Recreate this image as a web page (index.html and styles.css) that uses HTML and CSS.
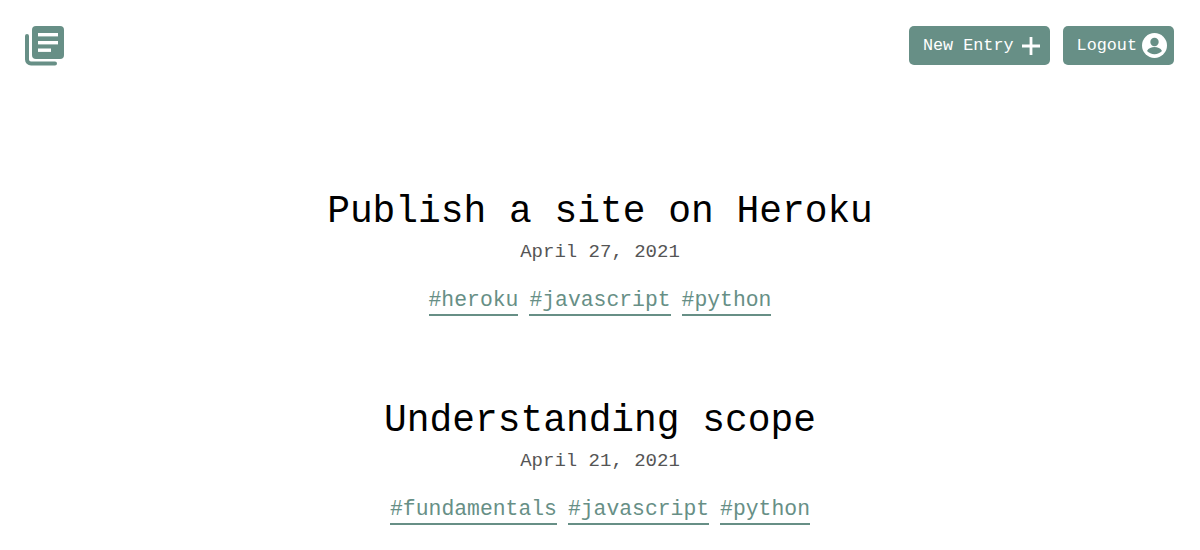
FILE: index.html
```html
<!DOCTYPE html>
<html lang="en">
<head>
  <meta charset="UTF-8">
  <meta name="viewport" content="width=device-width, initial-scale=1.0">
  <title>Journal</title>
  <link rel="stylesheet" href="styles.css">
</head>
<body>

  <!-- Top bar -->
  <header class="topbar">
    <a class="logo" href="#">
      <svg width="42" height="42" viewBox="0 0 42 42">
        <path class="logo-back" d="M3 10v23.500a4 4 0 0 0 4 4h24" />
        <rect class="logo-front" x="8" y="0" width="32" height="33" rx="4" />
        <rect class="logo-line" x="14" y="7" width="20" height="3.4" />
        <rect class="logo-line" x="14" y="15" width="20" height="3.4" />
        <rect class="logo-line" x="14" y="22.5" width="13" height="3.4" />
      </svg>
    </a>
    <nav class="actions">
      <a class="btn btn-new" href="#">New Entry
        <svg width="20" height="20" viewBox="0 0 20 20"><path class="plus" d="M10 1v18M1 10h18" /></svg>
      </a>
      <a class="btn btn-logout" href="#">Logout
        <svg width="25" height="25" viewBox="0 0 25 25">
          <circle class="user-bg" cx="12.5" cy="12.5" r="12.5" />
          <circle class="user-fg" cx="12.5" cy="9" r="4.2" />
          <path class="user-fg" d="M5 18c1.500-3 4.500-4 7.500-4s6 1 7.500 4c-1.800 2-4.500 3.200-7.500 3.200S6.800 20 5 18z" />
        </svg>
      </a>
    </nav>
  </header>

  <!-- Entries -->
  <main class="entries">
    <article class="entry">
      <h2 class="entry-title">Publish a site on Heroku</h2>
      <p class="entry-date">April 27, 2021</p>
      <div class="tags">
        <a class="tag" href="#">#heroku</a>
        <a class="tag" href="#">#javascript</a>
        <a class="tag" href="#">#python</a>
      </div>
    </article>
    <article class="entry">
      <h2 class="entry-title">Understanding scope</h2>
      <p class="entry-date">April 21, 2021</p>
      <div class="tags">
        <a class="tag" href="#">#fundamentals</a>
        <a class="tag" href="#">#javascript</a>
        <a class="tag" href="#">#python</a>
      </div>
    </article>
  </main>

</body>
</html>
```

FILE: styles.css
```css
body {
  margin: 0;
  font-family: "Liberation Mono", monospace;
  background-color: #fff;
  color: #000;
  overflow: hidden;
}

/* Top bar */
.topbar {
  display: flex;
  justify-content: space-between;
  align-items: flex-start;
  padding: 26px 26px 0 24px;
}

.logo {
  display: block;
  height: 42px;
}

.logo-back {
  fill: none;
  stroke: #678f86;
  stroke-width: 4;
  stroke-linecap: round;
}

.logo-front {
  fill: #678f86;
}

.logo-line {
  fill: #fff;
}

.actions {
  display: flex;
  gap: 13px;
}

.btn {
  display: flex;
  align-items: center;
  height: 39px;
  padding: 0 7px 0 14px;
  border-radius: 5px;
  background-color: #678f86;
  color: #fff;
  font-size: 16.8px;
  text-decoration: none;
  white-space: nowrap;
}

.btn-new {
  gap: 7px;
  padding-right: 9px;
}

.btn-logout {
  gap: 5px;
}

.plus {
  fill: none;
  stroke: #fff;
  stroke-width: 2.8;
}

.user-bg {
  fill: #fff;
}

.user-fg {
  fill: #678f86;
}

/* Entries */
.entries {
  display: flex;
  flex-direction: column;
  gap: 82px;
  margin-top: 121px;
}

.entry {
  text-align: center;
}

.entry-title {
  margin: 0;
  font-size: 37.9px;
  font-weight: normal;
  line-height: 46px;
}

.entry-date {
  margin: 5px 0 0;
  font-size: 19px;
  line-height: 24px;
  color: #555;
}

.tags {
  display: flex;
  justify-content: center;
  gap: 11px;
  margin-top: 23px;
}

.tag {
  border-bottom: 2px solid #678f86;
  color: #678f86;
  font-size: 21.4px;
  line-height: 27px;
  text-decoration: none;
}
```
